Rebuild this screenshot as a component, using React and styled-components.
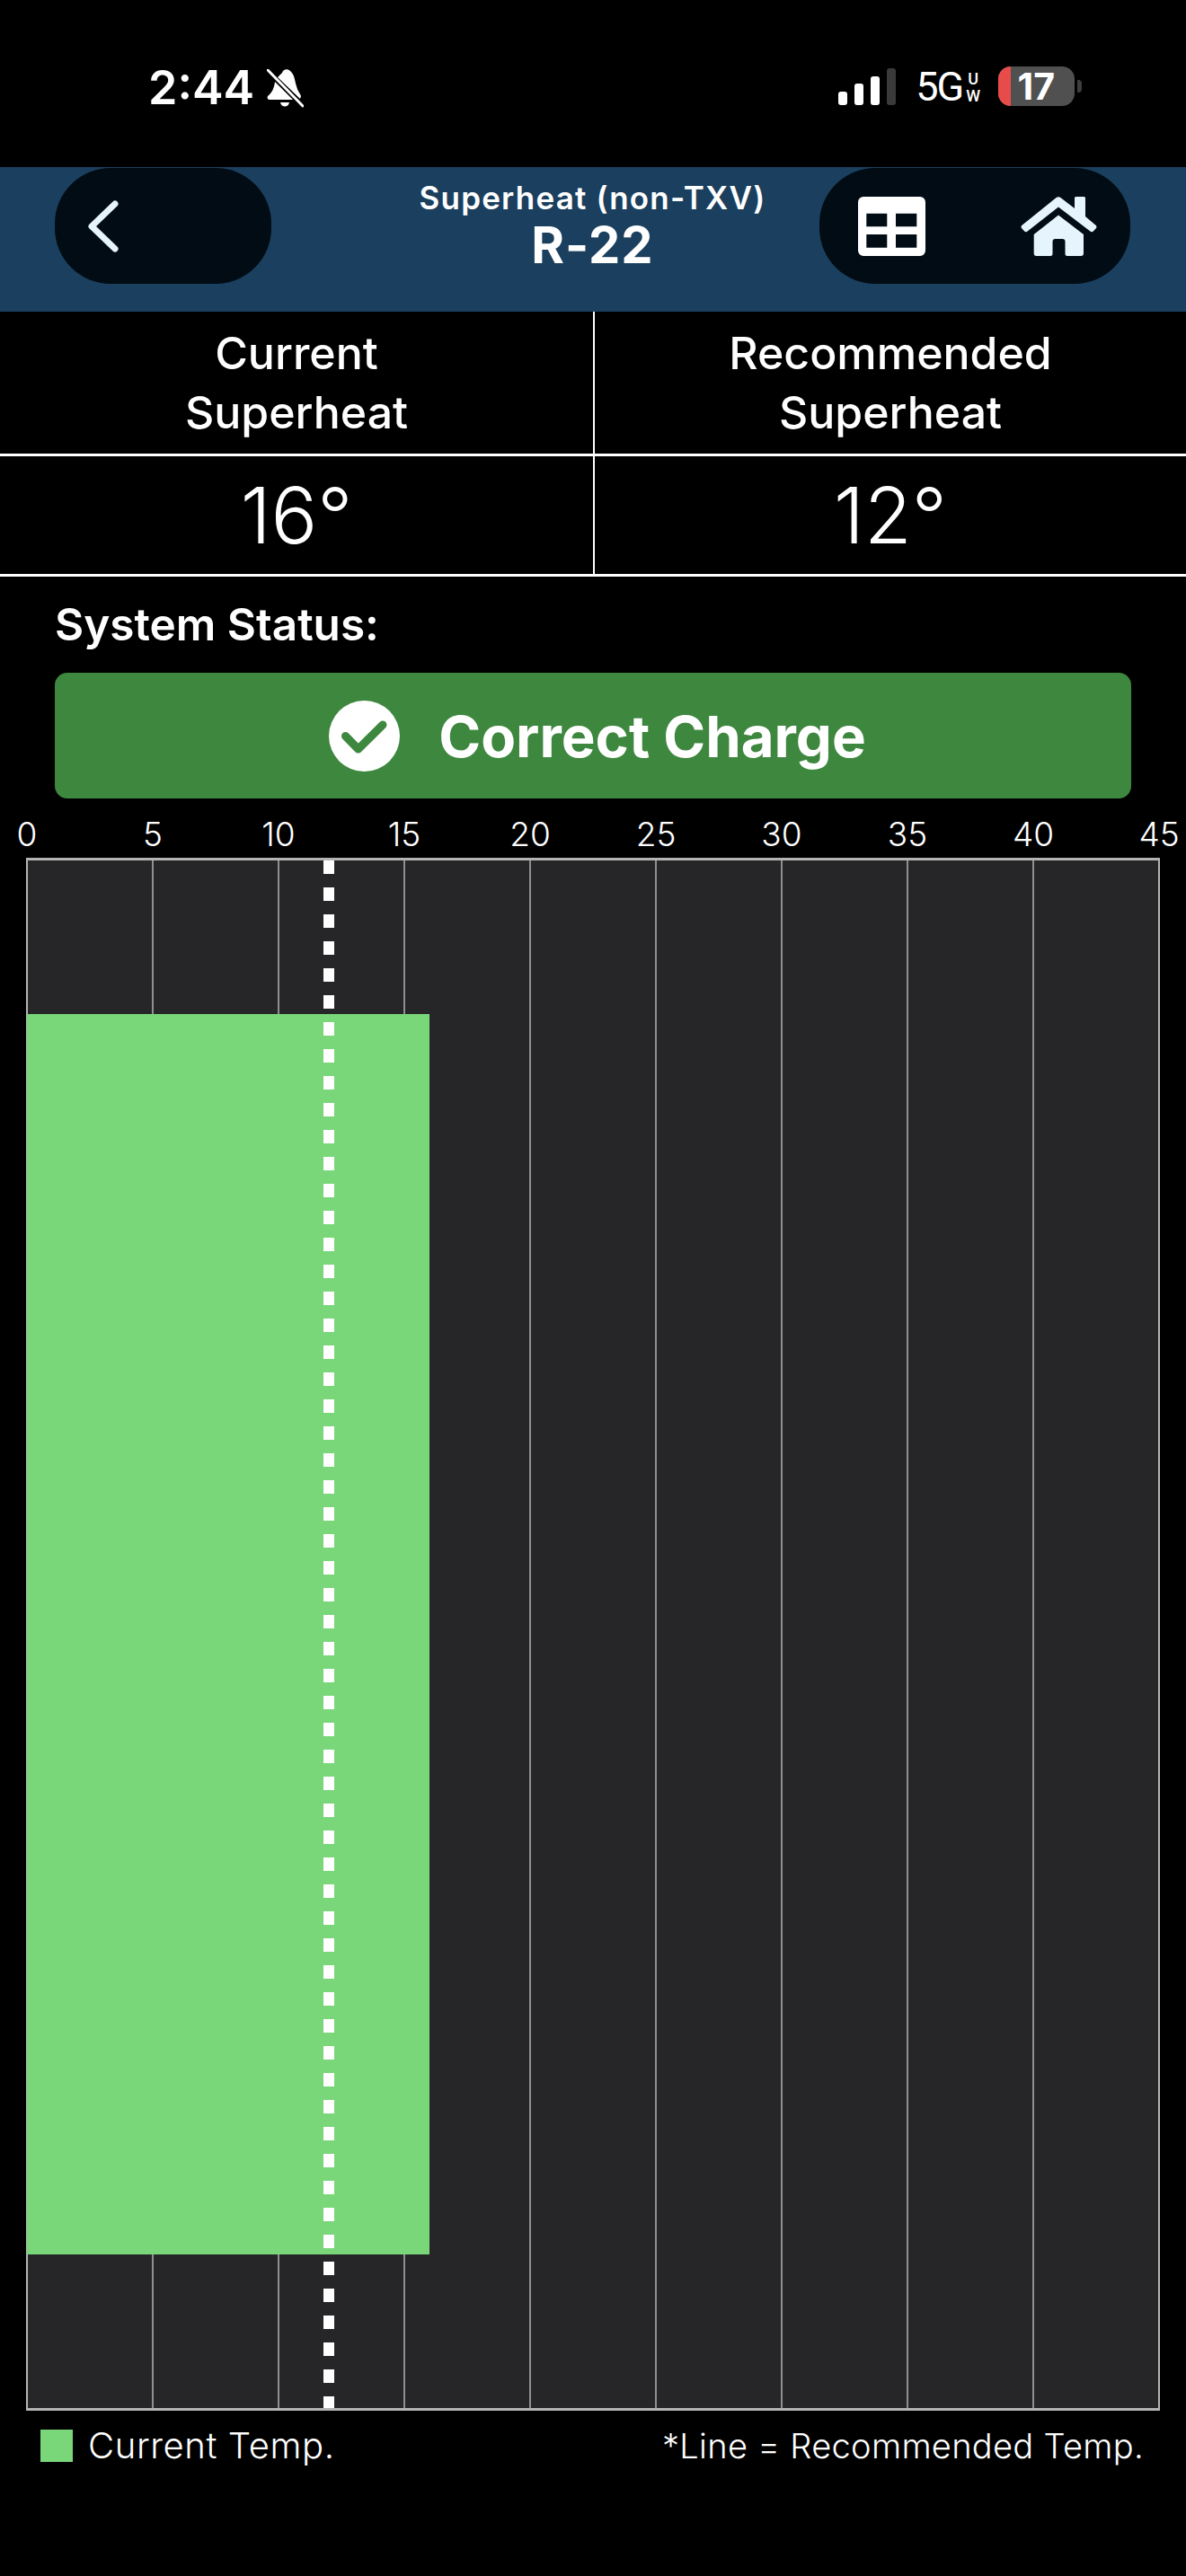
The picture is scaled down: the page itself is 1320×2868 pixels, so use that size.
import React from "react";
import styled, { createGlobalStyle } from "styled-components";

const PX_PER_DEGREE = 28;
const TICKS = [0, 5, 10, 15, 20, 25, 30, 35, 40, 45];
const CURRENT = 16;
const RECOMMENDED = 12;

function BellOff() {
  return (
    <BellIcon viewBox="0 0 41 43">
      <path
        d="M17 4 C18 0 23 -1 26 2 C31 6 31 13 33 19 C34 24 37 27 38 30 L37 33 L12 9 Z M9 14 L29 34 L3 34 C1 34 0 32 1 30 C6 26 8 21 9 14 Z M15 37 L25 37 C24 43 16 43 15 37 Z"
        fill="#fff"
      />
      <path d="M1 1 L40 41" stroke="#fff" strokeWidth="3" strokeLinecap="round" />
    </BellIcon>
  );
}

function Signal() {
  return (
    <SignalBars>
      <Bar $h={15} />
      <Bar $h={24} />
      <Bar $h={32} />
      <Bar $h={41} $off />
    </SignalBars>
  );
}

function ChevronLeft() {
  return (
    <ChevronIcon viewBox="0 0 34 58" fill="none">
      <path d="M30 4 L4 29 L30 54" stroke="#e6f4fd" strokeWidth="7" strokeLinecap="round" strokeLinejoin="round" />
    </ChevronIcon>
  );
}

function TableIcon() {
  return (
    <svg width="75" height="66" viewBox="0 0 75 66">
      <path
        fillRule="evenodd"
        fill="#fff"
        d="M6 0 H69 A6 6 0 0 1 75 6 V60 A6 6 0 0 1 69 66 H6 A6 6 0 0 1 0 60 V6 A6 6 0 0 1 6 0 Z M9.3 18.7 V33.3 H32.3 V18.7 Z M42 18.7 V33.3 H65.3 V18.7 Z M9.3 42 V56.7 H32.3 V42 Z M42 42 V56.7 H65.3 V42 Z"
      />
    </svg>
  );
}

function HomeIcon() {
  return (
    <svg width="85" height="66" viewBox="0 0 85 66">
      <g fill="#e6f4fd">
        <path d="M39 1.5 Q42 -0.8 45 1.5 L60 13 V1.5 Q60 0 61.5 0 H70.5 Q72 0 72 1.5 V22 L83.8 32 Q85 33.5 84 35 L80.8 38.6 Q79.3 40 77.8 38.8 L42 11.5 L7.2 38.8 Q5.7 40 4.2 38.6 L1 35 Q0 33.5 1.2 32 Z" />
        <path d="M42 20.5 L70 42 V63 Q70 66 67 66 H52 Q49.5 66 49.5 63.5 V50 Q49.5 47 46.5 47 H38.5 Q35.5 47 35.5 50 V63.5 Q35.5 66 33 66 H17.5 Q14.7 66 14.7 63 V42 Z" />
      </g>
    </svg>
  );
}

function CheckBadge() {
  return (
    <svg width="79" height="79" viewBox="0 0 79 79">
      <circle cx="39.5" cy="39.5" r="39.5" fill="#fff" />
      <path
        d="M18.5 39.5 L32.7 54 L60 27"
        fill="none"
        stroke="#3e873f"
        strokeWidth="9"
        strokeLinecap="round"
        strokeLinejoin="round"
      />
    </svg>
  );
}

export default function App() {
  return (
    <>
      <GlobalStyle />
      <Screen>
        <StatusBar>
          <Clock>
            <Time>2:44</Time>
            <BellOff />
          </Clock>
          <Indicators>
            <Signal />
            <Network>
              5G
              <NetworkBadge>
                <span>U</span>
                <span>W</span>
              </NetworkBadge>
            </Network>
            <Battery>
              <BatteryBody>
                <BatteryLevel />
                <BatteryText>17</BatteryText>
              </BatteryBody>
              <BatteryNub />
            </Battery>
          </Indicators>
        </StatusBar>

        <Header>
          <BackPill>
            <ChevronLeft />
          </BackPill>
          <TitleBlock>
            <Subtitle>Superheat (non-TXV)</Subtitle>
            <Title>R-22</Title>
          </TitleBlock>
          <ActionsPill>
            <TableIcon />
            <HomeIcon />
          </ActionsPill>
        </Header>

        <ReadingTable>
          <HeadCell>
            Current
            <br />
            Superheat
          </HeadCell>
          <HeadCell $right>
            Recommended
            <br />
            Superheat
          </HeadCell>
          <ValueCell>16°</ValueCell>
          <ValueCell $right>12°</ValueCell>
        </ReadingTable>

        <StatusSection>
          <StatusLabel>System Status:</StatusLabel>
          <Banner>
            <CheckBadge />
            <BannerText>Correct Charge</BannerText>
          </Banner>
        </StatusSection>

        <Axis>
          {TICKS.map((t) => (
            <Tick key={t}>
              <span>{t}</span>
            </Tick>
          ))}
        </Axis>

        <Chart>
          <GridLines>
            {TICKS.slice(1).map((t) => (
              <GridColumn key={t} />
            ))}
          </GridLines>
          <CurrentBar $value={CURRENT} />
          <TargetLine $value={RECOMMENDED} />
        </Chart>

        <Legend>
          <LegendItem>
            <Swatch />
            Current Temp.
          </LegendItem>
          <LegendNote>*Line = Recommended Temp.</LegendNote>
        </Legend>
      </Screen>
    </>
  );
}

const GlobalStyle = createGlobalStyle`
  html, body {
    margin: 0;
    padding: 0;
    background: #000;
  }
  body {
    font-family: "Inter", "Liberation Sans", sans-serif;
    color: #fff;
  }
`;

const Screen = styled.div`
  width: 1320px;
  height: 2868px;
  background: #000;
  overflow: hidden;
`;

const StatusBar = styled.div`
  height: 186px;
  box-sizing: border-box;
  padding: 74px 116px 0 165px;
  display: flex;
  justify-content: space-between;
  align-items: flex-start;
`;

const Clock = styled.div`
  display: flex;
  align-items: flex-start;
  gap: 14px;
`;

const Time = styled.span`
  font-size: 52px;
  font-weight: 600;
  line-height: 48px;
`;

const BellIcon = styled.svg`
  width: 41px;
  height: 43px;
  margin-top: 3px;
`;

const Indicators = styled.div`
  display: flex;
  align-items: flex-start;
`;

const SignalBars = styled.div`
  width: 64px;
  height: 41px;
  margin-top: 2px;
  display: flex;
  align-items: flex-end;
  justify-content: space-between;
`;

const Bar = styled.div`
  width: 10px;
  height: ${(p) => p.$h}px;
  border-radius: 3px;
  background: ${(p) => (p.$off ? "#3a3a3a" : "#fff")};
`;

const Network = styled.div`
  display: flex;
  align-items: flex-start;
  margin-left: 22px;
  margin-top: 1px;
  font-family: "Roboto", "Liberation Sans", sans-serif;
  font-size: 45px;
  line-height: 44px;
  letter-spacing: -2px;
`;

const NetworkBadge = styled.div`
  display: flex;
  flex-direction: column;
  margin-left: 4px;
  margin-top: 3px;
  font-size: 18px;
  font-weight: 500;
  line-height: 19px;
  letter-spacing: 0;
  text-align: center;
`;

const Battery = styled.div`
  display: flex;
  align-items: center;
  margin-left: 20px;
  gap: 3px;
`;

const BatteryBody = styled.div`
  position: relative;
  width: 85px;
  height: 44px;
  border-radius: 14px;
  background: #505050;
  display: flex;
  align-items: center;
  justify-content: flex-end;
  padding-right: 22px;
  box-sizing: border-box;
`;

const BatteryLevel = styled.div`
  position: absolute;
  left: 0;
  top: 0;
  bottom: 0;
  width: 14px;
  border-radius: 14px 0 0 14px;
  background: #e84c4a;
`;

const BatteryText = styled.span`
  font-size: 41px;
  font-weight: 700;
  line-height: 44px;
`;

const BatteryNub = styled.div`
  width: 5px;
  height: 14px;
  border-radius: 0 4px 4px 0;
  background: #3e3e3e;
`;

const Header = styled.header`
  height: 161px;
  box-sizing: border-box;
  padding: 1px 62px 0 61px;
  background: #1b3f5e;
  display: grid;
  grid-template-columns: 1fr auto 1fr;
  align-items: start;
`;

const BackPill = styled.div`
  justify-self: start;
  width: 241px;
  height: 129px;
  box-sizing: border-box;
  padding-left: 37px;
  border-radius: 62px;
  background: #020c14;
  display: flex;
  align-items: center;
`;

const ChevronIcon = styled.svg`
  width: 34px;
  height: 58px;
`;

const TitleBlock = styled.div`
  text-align: center;
  padding-top: 13px;
`;

const Subtitle = styled.div`
  font-size: 35px;
  font-weight: 600;
  line-height: 40px;
  letter-spacing: 1.2px;
`;

const Title = styled.div`
  font-size: 56px;
  font-weight: 700;
  line-height: 66px;
  letter-spacing: 1px;
`;

const ActionsPill = styled.div`
  justify-self: end;
  width: 346px;
  height: 129px;
  box-sizing: border-box;
  padding: 0 37px 0 43px;
  border-radius: 62px;
  background: #020c14;
  display: flex;
  align-items: center;
  justify-content: space-between;
`;

const ReadingTable = styled.div`
  display: grid;
  grid-template-columns: 1fr 1fr;
  grid-template-rows: 161px 134px;
`;

const Cell = styled.div`
  display: flex;
  align-items: center;
  justify-content: center;
  text-align: center;
  border-bottom: 3px solid #fff;
  box-sizing: border-box;
  border-left: ${(p) => (p.$right ? "2px solid #fff" : "none")};
`;

const HeadCell = styled(Cell)`
  font-size: 50px;
  font-weight: 500;
  line-height: 66px;
`;

const ValueCell = styled(Cell)`
  font-size: 86px;
  font-weight: 300;
`;

const StatusSection = styled.section`
  padding: 0 61px;
`;

const StatusLabel = styled.div`
  height: 107px;
  box-sizing: border-box;
  padding-top: 21px;
  font-size: 49.5px;
  font-weight: 600;
  line-height: 64px;
`;

const Banner = styled.div`
  height: 140px;
  box-sizing: border-box;
  padding-left: 10px;
  border-radius: 14px;
  background: #3e873f;
  display: flex;
  align-items: center;
  justify-content: center;
  gap: 43px;
`;

const BannerText = styled.span`
  font-size: 63.5px;
  font-weight: 700;
  line-height: 76px;
  padding-top: 2px;
`;

const Axis = styled.div`
  height: 66px;
  box-sizing: border-box;
  padding: 18px 30px 0;
  display: flex;
  justify-content: space-between;
`;

const Tick = styled.div`
  width: 0;
  display: flex;
  justify-content: center;
  font-size: 37px;
  font-weight: 300;
  line-height: 44px;
`;

const Chart = styled.div`
  position: relative;
  margin-left: 29px;
  width: 1262px;
  height: 1729px;
  box-sizing: border-box;
  border: 2px solid #b4b4b4;
  border-top-width: 3px;
  border-bottom-width: 3px;
  background: #262628;
`;

const GridLines = styled.div`
  height: 100%;
  display: grid;
  grid-template-columns: repeat(8, 140px) 1fr;
`;

const GridColumn = styled.div`
  box-sizing: border-box;
  border-right: 2px solid #8f8f8f;

  &:last-child {
    border-right: none;
  }
`;

const CurrentBar = styled.div`
  position: absolute;
  left: -1px;
  top: 171px;
  height: 1381px;
  width: ${(p) => p.$value * PX_PER_DEGREE}px;
  background: #79d779;
`;

const TargetLine = styled.div`
  position: absolute;
  top: 0;
  bottom: 0;
  left: ${(p) => p.$value * PX_PER_DEGREE - 7}px;
  width: 12px;
  background: repeating-linear-gradient(to bottom, #fff 0, #fff 15px, transparent 15px, transparent 30px);
`;

const Legend = styled.div`
  display: flex;
  justify-content: space-between;
  align-items: center;
  padding: 17px 47px 0 45px;
  font-size: 38px;
  font-weight: 300;
  line-height: 44px;
  letter-spacing: 0.3px;
`;

const LegendItem = styled.div`
  display: flex;
  align-items: center;
  gap: 17px;
  font-size: 40px;
  letter-spacing: 0.6px;
`;

const Swatch = styled.div`
  width: 36px;
  height: 36px;
  background: #79d779;
`;

const LegendNote = styled.div``;
